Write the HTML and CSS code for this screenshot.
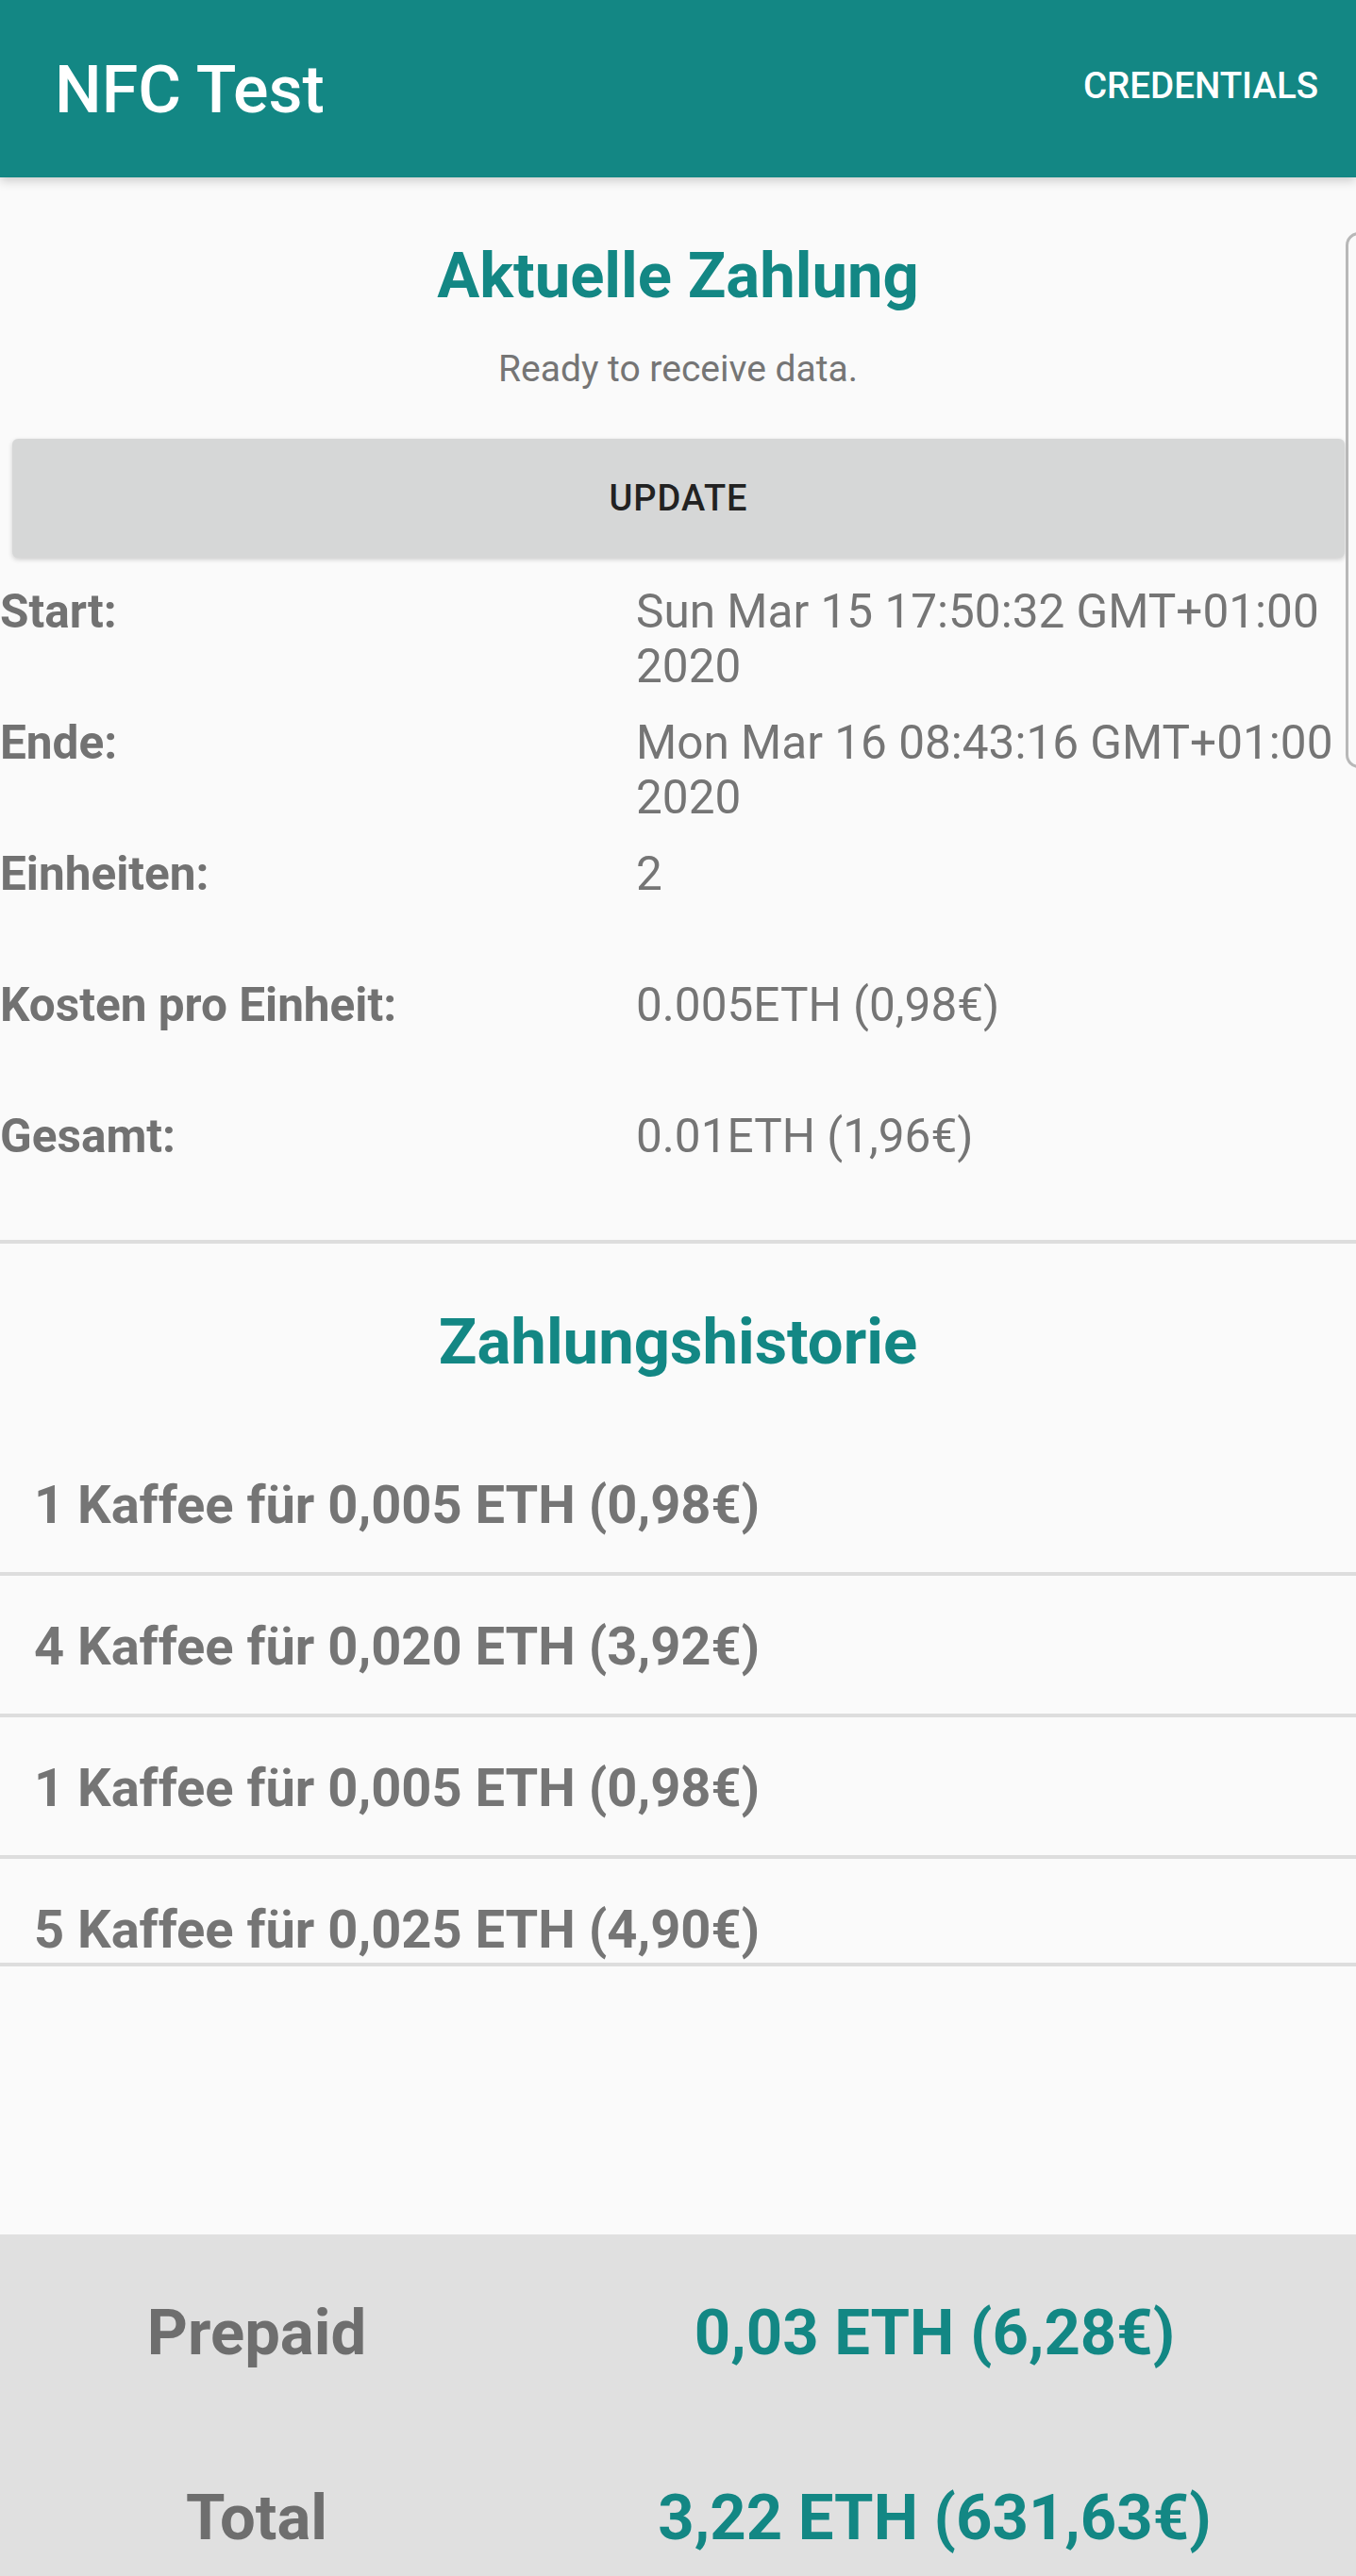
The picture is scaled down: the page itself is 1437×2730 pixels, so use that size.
FILE: index.html
```html
<!DOCTYPE html>
<html lang="de">
<head>
<meta charset="utf-8">
<title>NFC Test</title>
<link rel="stylesheet" href="styles.css">
</head>
<body>
<div class="app">
  <header class="appbar">
    <div class="appbar-title">NFC Test</div>
    <div class="appbar-action">CREDENTIALS</div>
  </header>

  <section class="current">
    <h1 class="section-title">Aktuelle Zahlung</h1>
    <p class="status">Ready to receive data.</p>
    <button class="update-btn" type="button">UPDATE</button>

    <div class="details">
      <div class="row"><div class="label">Start:</div><div class="value">Sun Mar 15 17:50:32 GMT+01:00 2020</div></div>
      <div class="row"><div class="label">Ende:</div><div class="value">Mon Mar 16 08:43:16 GMT+01:00 2020</div></div>
      <div class="row"><div class="label">Einheiten:</div><div class="value">2</div></div>
      <div class="row"><div class="label">Kosten pro Einheit:</div><div class="value">0.005ETH (0,98€)</div></div>
      <div class="row"><div class="label">Gesamt:</div><div class="value">0.01ETH (1,96€)</div></div>
    </div>
  </section>

  <div class="divider"></div>

  <section class="history">
    <h2 class="section-title">Zahlungshistorie</h2>
    <ul class="history-list">
      <li class="history-item">1 Kaffee für 0,005 ETH (0,98€)</li>
      <li class="history-item">4 Kaffee für 0,020 ETH (3,92€)</li>
      <li class="history-item">1 Kaffee für 0,005 ETH (0,98€)</li>
      <li class="history-item">5 Kaffee für 0,025 ETH (4,90€)</li>
    </ul>
  </section>

  <footer class="summary">
    <div class="summary-row">
      <div class="summary-label">Prepaid</div>
      <div class="summary-value">0,03 ETH (6,28€)</div>
    </div>
    <div class="summary-row">
      <div class="summary-label">Total</div>
      <div class="summary-value">3,22 ETH (631,63€)</div>
    </div>
  </footer>

  <div class="edge-frame"></div>
</div>
</body>
</html>
```

FILE: styles.css
```css
* { box-sizing: border-box; }

html, body {
  margin: 0;
  padding: 0;
}

body {
  background: #fafafa;
  font-family: Roboto, "Noto Sans", "Liberation Sans", sans-serif;
  color: #757575;
}

.app {
  position: relative;
  width: 1437px;
  height: 2730px;
  overflow: hidden;
  display: flex;
  flex-direction: column;
}

/* App bar */
.appbar {
  height: 188px;
  flex: none;
  background: #138784;
  display: flex;
  align-items: center;
  justify-content: space-between;
  padding: 0 40px 0 58px;
  box-shadow: 0 4px 10px rgba(0, 0, 0, 0.18);
  position: relative;
  z-index: 1;
}

.appbar-title {
  color: #ffffff;
  font-size: 70px;
  font-weight: 500;
  line-height: 1;
  margin-top: 2px;
}

.appbar-action {
  color: #ffffff;
  font-size: 38.5px;
  font-weight: 500;
  line-height: 1;
  margin-bottom: 6px;
}

/* Current payment */
.current {
  display: flex;
  flex-direction: column;
  align-items: center;
}

.section-title {
  margin: 64px 0 0;
  font-size: 67px;
  font-weight: 700;
  color: #138784;
  line-height: 80px;
  text-align: center;
}

.status {
  margin: 37px 0 0;
  font-size: 39px;
  line-height: 45px;
  color: #757575;
}

.update-btn {
  margin: 51px 12px 0 13px;
  align-self: stretch;
  height: 126px;
  border: none;
  border-radius: 6px;
  background: #d6d7d7;
  color: #222222;
  font-family: inherit;
  font-size: 38px;
  font-weight: 500;
  letter-spacing: 1px;
  box-shadow: 0 2px 5px rgba(0, 0, 0, 0.18);
}

.details {
  align-self: stretch;
  margin-top: 28px;
}

.row {
  display: grid;
  grid-template-columns: 674px 1fr;
  height: 139px;
  font-size: 49.5px;
  line-height: 58px;
}

.label {
  font-weight: 700;
  color: #727272;
}

.value {
  color: #757575;
}

.divider {
  height: 4px;
  background: #dddddd;
  flex: none;
}

/* History */
.history {
  display: flex;
  flex-direction: column;
  align-items: center;
}

.history .section-title {
  margin-top: 64px;
}

.history-list {
  align-self: stretch;
  list-style: none;
  margin: 58px 0 0;
  padding: 0;
  height: 564px;
  overflow: hidden;
  border-bottom: 4px solid #dddddd;
}

.history-item {
  height: 150px;
  padding: 3px 0 0 36px;
  display: flex;
  align-items: center;
  font-size: 56px;
  font-weight: 700;
  color: #757575;
  border-bottom: 4px solid #dddddd;
}

/* Summary footer */
.summary {
  margin-top: auto;
  height: 362px;
  flex: none;
  background: #e0e0e0;
  padding-top: 52px;
}

.summary-row {
  display: grid;
  grid-template-columns: 544px 1fr;
  height: 196px;
  align-content: start;
  font-size: 67px;
  font-weight: 700;
  line-height: 80px;
  padding-top: 12px;
}

.summary-label {
  text-align: center;
  color: #6e6e6e;
}

.summary-value {
  text-align: center;
  color: #138784;
}

/* partially visible frame at right edge */
.edge-frame {
  position: absolute;
  left: 1426px;
  top: 246px;
  width: 40px;
  height: 568px;
  border: 3px solid #b8b8b8;
  border-radius: 14px;
}
```
